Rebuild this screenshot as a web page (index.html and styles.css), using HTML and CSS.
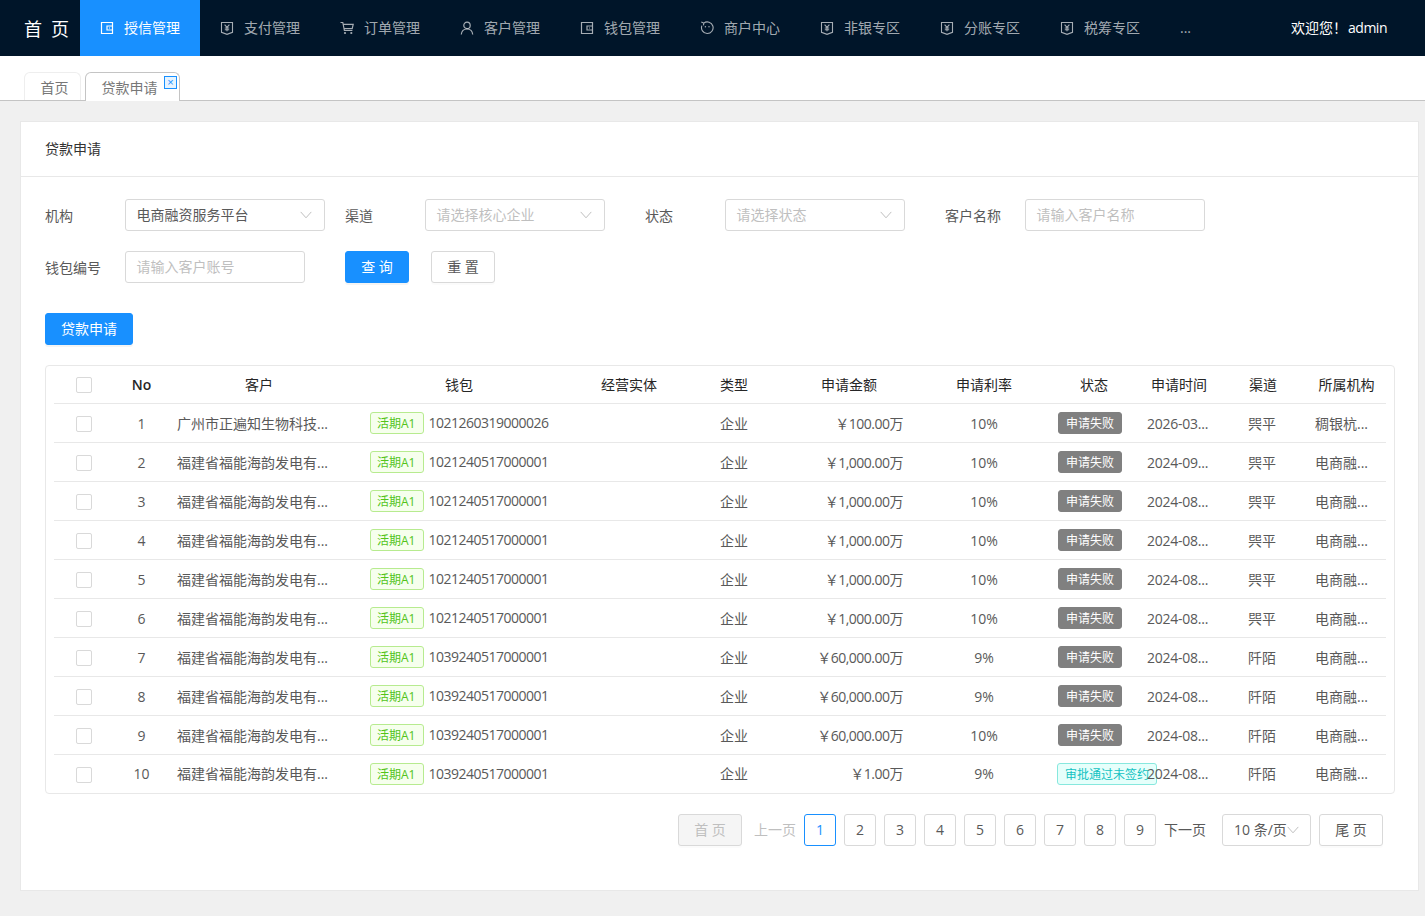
FILE: index.html
```html
<!DOCTYPE html>
<html lang="zh-CN">
<head>
<meta charset="utf-8">
<title>贷款申请</title>
<link rel="stylesheet" href="styles.css">
</head>
<body>
<svg class="defs" width="0" height="0" aria-hidden="true">
  <symbol id="i-wallet" viewBox="0 0 14 14"><path d="M1.500 1.500h11v11h-11z M12.500 5h-5.500v4h5.500 M9 7h1" fill="none" stroke="currentColor" stroke-width="1.200"/></symbol>
  <symbol id="i-shield" viewBox="0 0 14 14"><path d="M1.500 1.500h11v9.800l-5.500 2-5.500-2z" fill="none" stroke="currentColor" stroke-width="1.100"/><path d="M4.600 3.600 7 6.300l2.400-2.700 M7 6.300v4 M4.800 7h4.400 M4.800 8.700h4.400" fill="none" stroke="currentColor" stroke-width="1.100"/></symbol>
  <symbol id="i-cart" viewBox="0 0 14 14"><path d="M.5 1.500h2.300l1.600 8h8 M3.200 3.300h10l-1 4.300H4" fill="none" stroke="currentColor" stroke-width="1.200"/><circle cx="5" cy="12" r="1.100" fill="currentColor"/><circle cx="11.300" cy="12" r="1.100" fill="currentColor"/></symbol>
  <symbol id="i-user" viewBox="0 0 14 14"><circle cx="7" cy="4.400" r="3.200" fill="none" stroke="currentColor" stroke-width="1.200"/><path d="M1.300 13.500c.3-3.300 2.700-5.500 5.700-5.500s5.400 2.200 5.700 5.500" fill="none" stroke="currentColor" stroke-width="1.200"/></symbol>
  <symbol id="i-face" viewBox="0 0 14 14"><path d="M3.800 2.100A5.800 5.800 0 1 1 1.900 4.600 M1.300.9l2.500 1.200-.3 2.300" fill="none" stroke="currentColor" stroke-width="1.100"/><circle cx="5.400" cy="5.800" r=".7" fill="currentColor"/><circle cx="9" cy="5.800" r=".7" fill="currentColor"/></symbol>
  <symbol id="i-down" viewBox="0 0 12 8"><path d="M.7.900 6 6.800 11.300.900" fill="none" stroke="currentColor" stroke-width="1"/></symbol>
</svg>

<header class="topbar">
  <div class="logo">首 页</div>
  <nav class="menu">
    <a class="menu-item active"><svg class="mi"><use href="#i-wallet"/></svg>授信管理</a>
    <a class="menu-item"><svg class="mi"><use href="#i-shield"/></svg>支付管理</a>
    <a class="menu-item"><svg class="mi"><use href="#i-cart"/></svg>订单管理</a>
    <a class="menu-item"><svg class="mi"><use href="#i-user"/></svg>客户管理</a>
    <a class="menu-item"><svg class="mi"><use href="#i-wallet"/></svg>钱包管理</a>
    <a class="menu-item"><svg class="mi"><use href="#i-face"/></svg>商户中心</a>
    <a class="menu-item"><svg class="mi"><use href="#i-shield"/></svg>非银专区</a>
    <a class="menu-item"><svg class="mi"><use href="#i-shield"/></svg>分账专区</a>
    <a class="menu-item"><svg class="mi"><use href="#i-shield"/></svg>税筹专区</a>
    <a class="menu-more">...</a>
  </nav>
  <div class="welcome">欢迎您！<span class="user">admin</span></div>
</header>

<div class="tabs">
  <div class="tab">首页</div>
  <div class="tab current">贷款申请<span class="tab-close">×</span></div>
</div>

<main class="main">
  <section class="card">
    <div class="card-title">贷款申请</div>
    <div class="card-body">
      <div class="form-row">
        <label class="f-label">机构</label>
        <div class="ctrl w200 gap20">电商融资服务平台<svg class="caret"><use href="#i-down"/></svg></div>
        <label class="f-label">渠道</label>
        <div class="ctrl w180 gap40 ph">请选择核心企业<svg class="caret"><use href="#i-down"/></svg></div>
        <label class="f-label">状态</label>
        <div class="ctrl w180 gap40 ph">请选择状态<svg class="caret"><use href="#i-down"/></svg></div>
        <label class="f-label">客户名称</label>
        <div class="ctrl w180 ph">请输入客户名称</div>
      </div>
      <div class="form-row">
        <label class="f-label">钱包编号</label>
        <div class="ctrl w180 gap40 ph">请输入客户账号</div>
        <button class="btn primary w64">查 询</button>
        <button class="btn w64 ml22">重 置</button>
      </div>
      <button class="btn primary apply">贷款申请</button>

      <div class="table-wrap">
        <table class="grid">
          <colgroup>
            <col class="c1"><col class="c2"><col class="c3"><col class="c4"><col class="c5"><col class="c6">
            <col class="c7"><col class="c8"><col class="c9"><col class="c10"><col class="c11"><col class="c12">
          </colgroup>
          <thead>
            <tr><th><span class="check"></span></th><th class="no">No</th><th>客户</th><th>钱包</th><th>经营实体</th><th>类型</th><th>申请金额</th><th>申请利率</th><th>状态</th><th>申请时间</th><th>渠道</th><th>所属机构</th></tr>
          </thead>
          <tbody>
            <tr><td class="ctr"><span class="check"></span></td><td class="ctr">1</td><td>广州市正遍知生物科技...</td><td class="wallet"><span class="tag green">活期A1</span>1021260319000026</td><td></td><td class="ctr">企业</td><td class="amt">￥100.00万</td><td class="ctr">10%</td><td><span class="tag gray">申请失败</span></td><td class="date">2026-03...</td><td class="chan">巺平</td><td>稠银杭...</td></tr>
            <tr><td class="ctr"><span class="check"></span></td><td class="ctr">2</td><td>福建省福能海韵发电有...</td><td class="wallet"><span class="tag green">活期A1</span>1021240517000001</td><td></td><td class="ctr">企业</td><td class="amt">￥1,000.00万</td><td class="ctr">10%</td><td><span class="tag gray">申请失败</span></td><td class="date">2024-09...</td><td class="chan">巺平</td><td>电商融...</td></tr>
            <tr><td class="ctr"><span class="check"></span></td><td class="ctr">3</td><td>福建省福能海韵发电有...</td><td class="wallet"><span class="tag green">活期A1</span>1021240517000001</td><td></td><td class="ctr">企业</td><td class="amt">￥1,000.00万</td><td class="ctr">10%</td><td><span class="tag gray">申请失败</span></td><td class="date">2024-08...</td><td class="chan">巺平</td><td>电商融...</td></tr>
            <tr><td class="ctr"><span class="check"></span></td><td class="ctr">4</td><td>福建省福能海韵发电有...</td><td class="wallet"><span class="tag green">活期A1</span>1021240517000001</td><td></td><td class="ctr">企业</td><td class="amt">￥1,000.00万</td><td class="ctr">10%</td><td><span class="tag gray">申请失败</span></td><td class="date">2024-08...</td><td class="chan">巺平</td><td>电商融...</td></tr>
            <tr><td class="ctr"><span class="check"></span></td><td class="ctr">5</td><td>福建省福能海韵发电有...</td><td class="wallet"><span class="tag green">活期A1</span>1021240517000001</td><td></td><td class="ctr">企业</td><td class="amt">￥1,000.00万</td><td class="ctr">10%</td><td><span class="tag gray">申请失败</span></td><td class="date">2024-08...</td><td class="chan">巺平</td><td>电商融...</td></tr>
            <tr><td class="ctr"><span class="check"></span></td><td class="ctr">6</td><td>福建省福能海韵发电有...</td><td class="wallet"><span class="tag green">活期A1</span>1021240517000001</td><td></td><td class="ctr">企业</td><td class="amt">￥1,000.00万</td><td class="ctr">10%</td><td><span class="tag gray">申请失败</span></td><td class="date">2024-08...</td><td class="chan">巺平</td><td>电商融...</td></tr>
            <tr><td class="ctr"><span class="check"></span></td><td class="ctr">7</td><td>福建省福能海韵发电有...</td><td class="wallet"><span class="tag green">活期A1</span>1039240517000001</td><td></td><td class="ctr">企业</td><td class="amt">￥60,000.00万</td><td class="ctr">9%</td><td><span class="tag gray">申请失败</span></td><td class="date">2024-08...</td><td class="chan">阡陌</td><td>电商融...</td></tr>
            <tr><td class="ctr"><span class="check"></span></td><td class="ctr">8</td><td>福建省福能海韵发电有...</td><td class="wallet"><span class="tag green">活期A1</span>1039240517000001</td><td></td><td class="ctr">企业</td><td class="amt">￥60,000.00万</td><td class="ctr">9%</td><td><span class="tag gray">申请失败</span></td><td class="date">2024-08...</td><td class="chan">阡陌</td><td>电商融...</td></tr>
            <tr><td class="ctr"><span class="check"></span></td><td class="ctr">9</td><td>福建省福能海韵发电有...</td><td class="wallet"><span class="tag green">活期A1</span>1039240517000001</td><td></td><td class="ctr">企业</td><td class="amt">￥60,000.00万</td><td class="ctr">10%</td><td><span class="tag gray">申请失败</span></td><td class="date">2024-08...</td><td class="chan">阡陌</td><td>电商融...</td></tr>
            <tr><td class="ctr"><span class="check"></span></td><td class="ctr">10</td><td>福建省福能海韵发电有...</td><td class="wallet"><span class="tag green">活期A1</span>1039240517000001</td><td></td><td class="ctr">企业</td><td class="amt">￥1.00万</td><td class="ctr">9%</td><td class="over"><span class="tag cyan">审批通过未签约</span></td><td class="date">2024-08...</td><td class="chan">阡陌</td><td>电商融...</td></tr>
          </tbody>
        </table>
      </div>

      <div class="pager">
        <button class="btn w64 disabled">首 页</button>
        <span class="pg-text muted">上一页</span>
        <a class="pg on">1</a><a class="pg">2</a><a class="pg">3</a><a class="pg">4</a><a class="pg">5</a><a class="pg">6</a><a class="pg">7</a><a class="pg">8</a><a class="pg">9</a>
        <span class="pg-text">下一页</span>
        <div class="pg-size">10 条/页<svg class="caret-s"><use href="#i-down"/></svg></div>
        <button class="btn w64">尾 页</button>
      </div>
    </div>
  </section>
</main>
</body>
</html>
```

FILE: styles.css
```css
* { box-sizing: border-box; }
html, body { margin: 0; padding: 0; }
body {
  background: #f0f0f0;
  color: #595959;
  font: 14px/22px "Open Sans", "Noto Sans CJK SC", sans-serif;
  height: 916px;
  overflow: hidden;
}
.defs { position: absolute; }

.topbar { display: flex; height: 56px; background: #001529; }
.logo { width: 80px; padding-left: 24px; line-height: 56px; color: #fff; font-size: 18px; word-spacing: 5px; font-family: "Noto Sans CJK SC", sans-serif; }
.menu { display: flex; }
.menu-item {
  width: 120px; display: flex; align-items: center; padding-left: 20px;
  color: rgba(255,255,255,.65); font-size: 14px;
}
.menu-item.active { background: #1890ff; color: #fff; }
.mi { width: 14px; height: 14px; margin-right: 10px; flex: none; }
.menu-more { width: 40px; line-height: 56px; padding-left: 20px; color: rgba(255,255,255,.65); }
.welcome { margin-left: auto; margin-right: 38px; line-height: 56px; color: #fff; font-size: 14px; }
.user { margin-left: 1px; letter-spacing: -.5px; }

.tabs { display: flex; align-items: flex-end; gap: 4px; height: 45px; padding-left: 24px; background: #fff; border-bottom: 1px solid #c4c4c4; }
.tab {
  position: relative; height: 28px; width: 57px; line-height: 30px; text-align: center; font-size: 14px; color: #777;
  border: 1px solid #eee; border-bottom: 0; border-radius: 6px 6px 0 0; background: #fff; padding-left: 4px;
}
.tab.current { width: 95px; height: 29px; margin-bottom: -1px; border-color: #c4c4c4; padding-left: 0; padding-right: 6px; line-height: 29px; }
.tab-close {
  position: absolute; top: 3px; right: 2px; width: 13px; height: 13px;
  border: 1px solid #1890ff; background: #e6f4ff; color: #1890ff;
  font: 11px/10px "Liberation Sans", sans-serif; text-align: center;
}

.main { padding: 20px 6px 0 20px; }
.card { height: 770px; background: #fff; border: 1px solid #e8e8e8; }
.card-title { height: 55px; line-height: 54px; padding-left: 24px; color: #333; border-bottom: 1px solid #e8e8e8; font-size: 14px; }
.card-body { padding: 22px 23px 0 24px; }

.form-row { display: flex; align-items: center; height: 32px; margin-bottom: 20px; }
.f-label { width: 80px; flex: none; padding-top: 2px; }
.ctrl {
  position: relative; flex: none; height: 32px; line-height: 30px; padding-left: 10.500px;
  border: 1px solid #d9d9d9; border-radius: 3px; background: #fff;
}
.ph { color: #bfbfbf; }
.w200 { width: 200px; }
.w180 { width: 180px; }
.gap20 { margin-right: 20px; }
.gap40 { margin-right: 40px; }
.caret { position: absolute; right: 12px; top: 11px; width: 12px; height: 8px; color: #bfbfbf; }

.btn {
  height: 32px; border: 1px solid #d9d9d9; border-radius: 3px; background: #fff; color: #595959;
  font: inherit; padding: 0; box-shadow: 0 2px 0 rgba(0,0,0,.015);
}
.btn.primary { background: #1890ff; border-color: #1890ff; color: #fff; box-shadow: 0 2px 0 rgba(0,0,0,.045); }
.btn.disabled { background: #f5f5f5; color: #bfbfbf; }
.w64 { width: 64px; flex: none; }
.ml22 { margin-left: 22px; }
.apply { display: block; width: 88px; margin-top: 30px; }

.table-wrap { margin-top: 20px; padding: 0 8px; height: 429px; border: 1px solid #e8e8e8; border-radius: 4px; }
.grid { width: 1332px; table-layout: fixed; border-collapse: collapse; }
.c1 { width: 60px; } .c2 { width: 55px; } .c3 { width: 180px; } .c4 { width: 220px; }
.c5 { width: 120px; } .c6 { width: 90px; } .c7 { width: 140px; } .c8 { width: 130px; }
.c9 { width: 90px; } .c10 { width: 80px; } .c11 { width: 88px; } .c12 { width: 79px; }
.grid th { height: 37px; padding: 2px 0 0; font-weight: 400; color: #262626; text-align: center; border-bottom: 1px solid #e8e8e8; }
.grid th.no { font-weight: 600; }
.grid th .check { margin-top: -4px; }
.grid td { height: 39px; padding: 2px 0 0 8px; white-space: nowrap; border-bottom: 1px solid #e8e8e8; overflow: hidden; }
.grid tbody tr:last-child td { border-bottom: 0; height: 38px; }
.grid td.ctr { text-align: center; padding: 2px 0 0; }
.grid td.amt { text-align: right; padding: 2px 16px 0 0; letter-spacing: -.5px; }
.grid td.date { letter-spacing: -.25px; }
.grid td.chan { padding-left: 29px; }
.grid td.wallet { padding: 2px 0 0 21px; letter-spacing: -.5px; }
.grid td.over { overflow: visible; }
.check { display: inline-block; width: 16px; height: 16px; vertical-align: middle; border: 1px solid #d9d9d9; border-radius: 2px; background: #fff; }
.grid td .check { margin-top: -2px; }

.tag { display: inline-block; height: 22px; line-height: 22px; padding: 0 7px; font-size: 12px; letter-spacing: 0; border: 1px solid transparent; border-radius: 3px; vertical-align: middle; }
.tag.green { color: #52c41a; background: #f6ffed; border-color: #b7eb8f; padding: 0 8px 0 6px; margin-right: 4px; margin-top: -1px; position: relative; top: -1px; }
.tag.gray { color: #fff; background: #808080; border-color: #808080; margin: -4px 0 0 1px; }
.tag.cyan { color: #13c2c2; background: #e6fffb; border-color: #87e8de; width: 100px; white-space: nowrap; overflow: visible; margin-top: -3px; }

.pager { display: flex; align-items: center; justify-content: flex-end; gap: 8px; margin-top: 20px; padding-right: 12px; }
.pg-text { width: 42px; flex: none; white-space: nowrap; color: #595959; }
.pg-text.muted { color: #bfbfbf; margin-left: 4px; }
.pg { width: 32px; height: 32px; line-height: 30px; text-align: center; border: 1px solid #d9d9d9; border-radius: 3px; background: #fff; }
.pg.on { border-color: #1890ff; color: #1890ff; }
.pg-size { display: flex; align-items: center; width: 89px; height: 32px; margin-left: 8px; padding-left: 11px; border: 1px solid #d9d9d9; border-radius: 3px; white-space: nowrap; }
.caret-s { width: 12px; height: 8px; color: #bfbfbf; flex: none; }
```
